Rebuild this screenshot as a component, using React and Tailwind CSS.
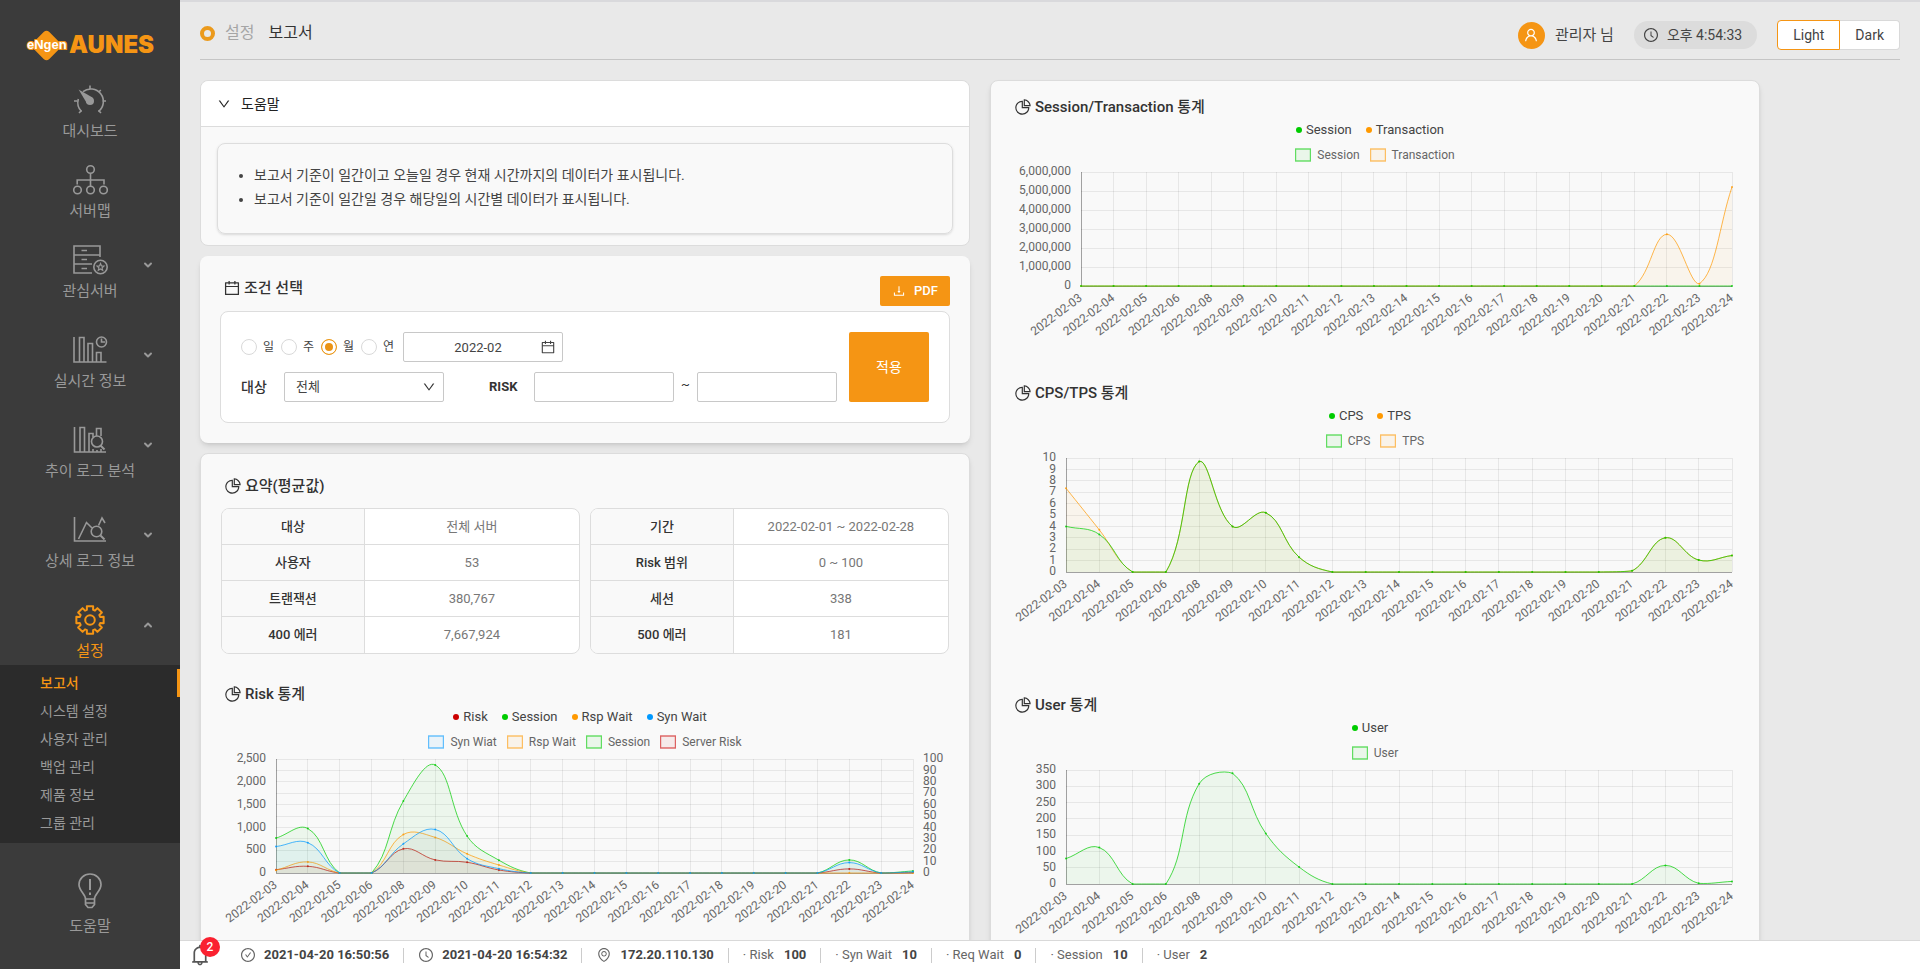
import React from 'react';
import {
  AiOutlineBell,
  AiOutlineCalendar,
  AiOutlineCheckCircle,
  AiOutlineClockCircle,
  AiOutlineDown,
  AiOutlineDownload,
  AiOutlineEnvironment,
  AiOutlinePieChart,
  AiOutlineUser,
} from 'react-icons/ai';
import { ChevronDown, ChevronUp } from 'lucide-react';

const GREEN = '#00cc00';
const ORANGE = '#ff9900';
const BLUE = '#0099ff';
const RED = '#cc0000';

const dates = [3, 4, 5, 6, 8, 9, 10, 11, 12, 13, 14, 15, 16, 17, 18, 19, 20, 21, 22, 23, 24].map(
  (day) => `2022-02-${String(day).padStart(2, '0')}`
);

const zeros = (count) => Array(count).fill(0);

const range = (max, step) => {
  const ticks = [];
  for (let value = 0; value <= max; value += step) ticks.push(value);
  return ticks;
};

const riskSeries = [
  { name: 'Syn Wiat', color: BLUE, data: [580, 665, 0, 0, 640, 955, 315, 95, ...zeros(10), 228, 0, 25] },
  { name: 'Rsp Wait', color: ORANGE, data: [60, 243, 0, 0, 845, 780, 420, 175, ...zeros(13)] },
  { name: 'Session', color: GREEN, data: [765, 975, 0, 0, 1580, 2368, 810, 280, ...zeros(10), 287, 0, 45] },
  { name: 'Server Risk', color: RED, data: [73, 147, 0, 0, 530, 287, 235, 66, ...zeros(10), 90, 0, 10] },
];

const transactionSeries = [
  { name: 'Session', color: GREEN, data: zeros(21) },
  { name: 'Transaction', color: ORANGE, data: [...zeros(18), 2720000, 120000, 5210000] },
];

const cpsTail = [0, 0, 9.7, 4, 5.2, 1.3, ...zeros(9), 0.1, 3, 1.05, 1.45];
const cpsSeries = [
  { name: 'CPS', color: GREEN, data: [4, 3.3, ...cpsTail] },
  { name: 'TPS', color: ORANGE, data: [7.35, 3.7, ...cpsTail] },
];

const userSeries = [
  { name: 'User', color: GREEN, data: [78, 112, 0, 0, 308, 340, 155, 52, ...zeros(10), 57, 2, 8] },
];

const clamp = (value, min, max) => Math.min(Math.max(value, min), max);

// Cubic spline through the points, control points kept inside the plot
const splinePath = (points, top, bottom) => {
  const tension = 0.4;
  const controls = points.map((point, i) => {
    const prev = points[i - 1] || point;
    const next = points[i + 1] || point;
    const before = Math.hypot(point[0] - prev[0], point[1] - prev[1]);
    const after = Math.hypot(next[0] - point[0], next[1] - point[1]);
    const a = (tension * before) / (before + after);
    const b = (tension * after) / (before + after);
    const dx = next[0] - prev[0];
    const dy = next[1] - prev[1];
    return {
      inX: point[0] - a * dx,
      inY: clamp(point[1] - a * dy, top, bottom),
      outX: point[0] + b * dx,
      outY: clamp(point[1] + b * dy, top, bottom),
    };
  });
  return points
    .map(([x, y], i) => {
      if (i === 0) return `M${x},${y}`;
      return `C${controls[i - 1].outX},${controls[i - 1].outY} ${controls[i].inX},${controls[i].inY} ${x},${y}`;
    })
    .join(' ');
};

const LineChart = ({ label, series, max, step, left, right = 721, rightAxis }) => {
  const top = 3;
  const bottom = 117;
  const xAt = (i) => left + ((right - left) * i) / (dates.length - 1);
  const yAt = (value) => bottom - ((bottom - top) * value) / max;
  const ticks = range(max, step);
  const gridTicks = rightAxis ? range(max, max / 10) : ticks;

  return (
    <svg viewBox="0 0 728 178" className="block w-full overflow-visible" role="img" aria-label={label}>
      <g stroke="#000" strokeOpacity="0.07" shapeRendering="crispEdges">
        {gridTicks.map((tick) => (
          <line key={tick} x1={left} x2={right} y1={yAt(tick)} y2={yAt(tick)} />
        ))}
        {dates.map((date, i) => (
          <line key={date} x1={xAt(i)} x2={xAt(i)} y1={top} y2={bottom} />
        ))}
      </g>
      <path
        d={`M${left},${top}V${bottom}H${right}`}
        fill="none"
        stroke="#000"
        strokeOpacity="0.3"
        shapeRendering="crispEdges"
      />
      {[...series].reverse().map((item) => {
        const points = item.data.map((value, i) => [xAt(i), yAt(value)]);
        const path = splinePath(points, top, bottom);
        return (
          <g key={item.name}>
            <path d={`${path} L${right},${bottom} L${left},${bottom}Z`} fill={item.color} fillOpacity="0.05" />
            <path d={path} fill="none" stroke={item.color} strokeOpacity="0.7" />
            {points.map(([x, y]) => (
              <circle key={x} cx={x} cy={y} r="1" fill={item.color} fillOpacity="0.8" />
            ))}
          </g>
        );
      })}
      <g fill="#666" fontSize="12" dominantBaseline="middle">
        {ticks.map((tick) => (
          <text key={tick} x={left - 10} y={yAt(tick)} textAnchor="end">
            {tick.toLocaleString('en-US')}
          </text>
        ))}
        {rightAxis &&
          range(100, 10).map((tick) => (
            <text key={tick} x={right + 10} y={yAt((tick * max) / 100)}>
              {tick}
            </text>
          ))}
        {dates.map((date, i) => (
          <text
            key={date}
            x={xAt(i)}
            y={bottom + 11}
            textAnchor="end"
            transform={`rotate(-37 ${xAt(i)} ${bottom + 11})`}
          >
            {date}
          </text>
        ))}
      </g>
    </svg>
  );
};

const SectionTitle = ({ icon: Icon = AiOutlinePieChart, children }) => (
  <h2 className="flex h-6 items-center gap-[3px] pl-[3px] text-[15px] font-medium text-[#333]">
    <Icon className="size-[18px]" />
    {children}
  </h2>
);

const ChartSection = ({ title, dots, series, className, ...chart }) => (
  <section className={className}>
    <SectionTitle>{title}</SectionTitle>
    <ul className="flex h-[22px] items-center justify-center gap-3.5 pr-2.5 text-[13px] text-[#444]">
      {dots.map(([name, color]) => (
        <li key={name} className="flex items-center gap-1">
          <span className="size-1.5 rounded-full" style={{ backgroundColor: color }} />
          {name}
        </li>
      ))}
    </ul>
    <ul className="flex h-7 items-center justify-center gap-2.5 text-xs text-[#666]">
      {series.map(({ name, color }) => (
        <li key={name} className="flex items-center gap-1.5">
          <svg className="h-3.5 w-4" viewBox="0 0 16 14">
            <rect
              x="0.5"
              y="1"
              width="15"
              height="12"
              fill={color}
              fillOpacity="0.06"
              stroke={color}
              strokeOpacity="0.6"
              strokeWidth="1.4"
            />
          </svg>
          {name}
        </li>
      ))}
    </ul>
    <LineChart label={title} series={series} {...chart} />
  </section>
);

const SummaryTable = ({ rows }) => (
  <div className="flex-1 overflow-hidden rounded-lg border border-[#ddd] bg-white">
    <table className="w-full table-fixed border-separate border-spacing-0 text-[13px]">
      <tbody>
        {rows.map(([name, value], i) => {
          const border = i < rows.length - 1 ? 'border-b border-[#ddd]' : '';
          return (
            <tr key={name} className="h-9">
              <th scope="row" className={`w-2/5 border-r border-r-[#ddd] bg-[#f9f9f9] font-medium text-[#333] ${border}`}>
                {name}
              </th>
              <td className={`text-center text-[#777] ${border}`}>{value}</td>
            </tr>
          );
        })}
      </tbody>
    </table>
  </div>
);

const Drawing = ({ children }) => (
  <svg viewBox="0 0 36 32" className="h-8 w-9" fill="none" stroke="currentColor" strokeWidth="1.6">
    {children}
  </svg>
);

const DashboardIcon = () => (
  <Drawing>
    <path d="M9.5 27.5A13 13 0 0 1 6.3 15M11 7.6A12.6 12.6 0 0 1 26.5 27.5" />
    <path d="M18 1.5V5M28.8 6L26.6 8.3M2 17H5.5M30.5 17H34M9.5 26.5L7 29M26.5 26.5L29 29" />
    <circle cx="18" cy="17" r="4" fill="currentColor" stroke="none" />
    <path d="M6.6 5.6L20.5 13.6L15 19.6Z" fill="currentColor" stroke="none" />
  </Drawing>
);

const ServerMapIcon = () => (
  <Drawing>
    <circle cx="18.5" cy="5.5" r="3.8" />
    <circle cx="5.5" cy="26" r="3.8" />
    <circle cx="18.5" cy="26" r="3.8" />
    <circle cx="31.5" cy="26" r="3.8" />
    <path d="M18.5 9.5V22M5.2 20.5V16H32V20.5" />
  </Drawing>
);

const FavoriteServerIcon = () => (
  <Drawing>
    <path d="M28 13V2H2V29H20M2 11H28M2 20H20M9.5 6.5H15M9.5 15.5H15M9.5 24.5H15" />
    <circle cx="28.5" cy="23" r="6.7" />
    <path
      d="M28.5 19.5l1 2.4 2.5.2-1.9 1.7.6 2.5-2.2-1.4-2.2 1.4.6-2.5-1.9-1.7 2.5-.2z"
      strokeWidth="1.2"
    />
  </Drawing>
);

const RealtimeIcon = () => (
  <Drawing>
    <path d="M2 3V28H34.5M7.5 28V3.5H12V28M16 28V9.5H20.5V28M24.5 28V18.5H29V28" />
    <circle cx="29.5" cy="8" r="5" />
    <path d="M29.5 4.5V8H33" />
  </Drawing>
);

const TrendLogIcon = () => (
  <Drawing>
    <path d="M2.5 3V28H34M8 28V3.5H12.5V28M17 28V9.5H21V13M24.5 12V4.5H29V12M21 25V28M25 26V28M29 25V28" />
    <circle cx="25" cy="17.5" r="5.5" />
    <path d="M28.5 21.5L32.5 25.5" strokeWidth="2" />
  </Drawing>
);

const DetailLogIcon = () => (
  <Drawing>
    <path d="M2.5 3V27H34M6.5 25L14.5 8.5L20 14M26.5 11.5L30 4L33 9" />
    <circle cx="24.5" cy="17.5" r="5.3" />
    <path d="M28.5 21.5L32.5 25.5" strokeWidth="2" />
  </Drawing>
);

const SettingIcon = () => {
  const points = [];
  for (let tooth = 0; tooth < 8; tooth += 1) {
    [[-17, 10.6], [-13, 14], [13, 14], [17, 10.6]].forEach(([shift, radius]) => {
      const angle = ((tooth * 45 + shift) * Math.PI) / 180;
      points.push(`${18 + radius * Math.sin(angle)},${16 - radius * Math.cos(angle)}`);
    });
  }
  return (
    <Drawing>
      <polygon points={points.join(' ')} strokeWidth="2" strokeLinejoin="round" />
      <circle cx="18" cy="16" r="4.8" strokeWidth="2" />
    </Drawing>
  );
};

const BulbIcon = () => (
  <svg viewBox="0 0 26 36" className="mb-0.5 h-9 w-[26px]" fill="none" stroke="currentColor" strokeWidth="1.7">
    <path d="M8.5 26C8.5 21 2 18 2 11.5A11 10.5 0 0 1 24 11.5C24 18 17.5 21 17.5 26ZM8.5 26V31.5L11 34.5H15L17.5 31.5V26M8.5 30H17.5" />
    <path d="M13 6V17M13 19.5V22" strokeWidth="2" />
  </svg>
);

const Logo = () => (
  <svg viewBox="0 0 136 32" className="h-8 w-[136px]" role="img" aria-label="eNgen AUNES">
    <rect x="11" y="5" width="23" height="23" rx="4" fill="#f59514" transform="rotate(45 22.5 16.5)" />
    <text
      x="3"
      y="20"
      fontSize="13"
      className="font-['Liberation_Sans'] font-bold"
      fill="#fff"
      stroke="#f59514"
      strokeWidth="2"
      paintOrder="stroke"
    >
      eNgen
    </text>
    <text x="45" y="24" fontSize="24" className="font-['Inter'] font-black" fill="#f59514">
      AUNES
    </text>
  </svg>
);

const menus = [
  { name: '대시보드', icon: DashboardIcon },
  { name: '서버맵', icon: ServerMapIcon },
  { name: '관심서버', icon: FavoriteServerIcon, sub: true },
  { name: '실시간 정보', icon: RealtimeIcon, sub: true },
  { name: '추이 로그 분석', icon: TrendLogIcon, sub: true },
  { name: '상세 로그 정보', icon: DetailLogIcon, sub: true },
];

const settingMenus = ['보고서', '시스템 설정', '사용자 관리', '백업 관리', '제품 정보', '그룹 관리'];

const MenuButton = ({ name, icon: Icon, sub, open }) => {
  const Chevron = open ? ChevronUp : ChevronDown;
  return (
    <button
      type="button"
      className={`grid w-full grid-cols-[38px_1fr_38px] text-[15px] ${open ? 'text-[#f59514]' : 'text-[#999]'}`}
    >
      <span />
      <span className="flex flex-col items-center gap-[5px]">
        <Icon />
        <span className="h-5 leading-5 whitespace-nowrap">{name}</span>
      </span>
      {sub && <Chevron className="mt-[15px] size-3 text-[#999]" strokeWidth={4} />}
    </button>
  );
};

const Sidebar = () => (
  <aside className="w-[180px] shrink-0 bg-[#3b3b3b]">
    <a href="#" className="flex h-[84px] items-center pt-1.5 pl-6">
      <Logo />
    </a>
    <nav>
      <ul>
        {menus.map((menu) => (
          <li key={menu.name} className={menu.sub ? 'pb-[33px]' : 'pb-[23px]'}>
            <MenuButton {...menu} />
          </li>
        ))}
        <li>
          <MenuButton name="설정" icon={SettingIcon} sub open />
          <ul className="mt-1 bg-[#2b2b2b] pt-1 pb-1.5 text-sm">
            {settingMenus.map((name, i) => (
              <li key={name}>
                <a
                  href="#"
                  className={`block h-7 pl-10 leading-7 ${
                    i === 0 ? 'border-r-[3px] border-[#f59514] font-medium text-[#f59514]' : 'text-[#999]'
                  }`}
                >
                  {name}
                </a>
              </li>
            ))}
          </ul>
        </li>
        <li className="pt-[30px]">
          <MenuButton name="도움말" icon={BulbIcon} />
        </li>
      </ul>
    </nav>
  </aside>
);

const Header = () => (
  <header className="mx-5 flex h-[58px] items-start justify-between border-b border-[#c5c5c5] pt-[18px]">
    <div className="flex h-[26px] items-center text-base">
      <span className="mr-2.5 size-[15px] rounded-full border-4 border-[#eb9a1c]" />
      <span className="mr-3.5 text-[#a5a5a5]">설정</span>
      <h1 className="text-[#333]">보고서</h1>
    </div>
    <div className="flex items-center text-sm text-[#444]">
      <span className="mr-2.5 flex size-[27px] items-center justify-center rounded-full bg-[#f59514] text-white">
        <AiOutlineUser className="size-4" />
      </span>
      <span className="mr-5 text-[15px] leading-5">관리자 님</span>
      <span className="mr-5 flex h-7 items-center gap-2 rounded-full bg-[#dcdcdc] px-[9px] pr-[15px]">
        <AiOutlineClockCircle className="size-4" />
        오후 4:54:33
      </span>
      <button type="button" className="h-[30px] rounded-l-sm border border-[#f59514] bg-white px-[15px]">
        Light
      </button>
      <button type="button" className="h-[30px] rounded-r-sm border border-l-0 border-[#d9d9d9] bg-white px-[15px]">
        Dark
      </button>
    </div>
  </header>
);

const HelpCard = () => (
  <section className="rounded-lg border border-[#dcdcdc] bg-[#f9f9f9] pb-[11px]">
    <button
      type="button"
      className="flex h-[46px] w-full items-center gap-2.5 rounded-t-lg border-b border-[#dcdcdc] bg-white pl-4 text-sm text-[#222]"
    >
      <AiOutlineDown className="size-3.5" />
      도움말
    </button>
    <ul className="m-4 mb-0 h-[91px] list-disc rounded-lg border border-[#ddd] pt-[19px] pl-9 text-sm leading-6 text-[#444] shadow-sm">
      <li>보고서 기준이 일간이고 오늘일 경우 현재 시간까지의 데이터가 표시됩니다.</li>
      <li>보고서 기준이 일간일 경우 해당일의 시간별 데이터가 표시됩니다.</li>
    </ul>
  </section>
);

const fieldClass = 'h-[30px] rounded-xs border border-[#c8c8c8] bg-white text-[13px] text-[#444] outline-none';

const ConditionCard = () => (
  <section className="rounded-lg bg-[#f9f9f9] p-5 shadow-md">
    <div className="flex items-start justify-between">
      <SectionTitle icon={AiOutlineCalendar}>조건 선택</SectionTitle>
      <button
        type="button"
        className="flex h-[30px] w-[70px] items-center justify-center gap-2 rounded-xs bg-[#f59514] text-[13px] font-medium text-white"
      >
        <AiOutlineDownload className="size-3.5" />
        PDF
      </button>
    </div>
    <form className="mt-[5px] flex gap-3 rounded-lg border border-[#ddd] bg-white p-5" onSubmit={(e) => e.preventDefault()}>
      <div className="flex-1 space-y-2.5">
        <div className="flex items-center">
          {['일', '주', '월', '연'].map((unit) => (
            <label key={unit} className="flex w-10 items-center gap-1.5 text-xs text-[#444]">
              <input
                type="radio"
                name="unit"
                defaultChecked={unit === '월'}
                className="size-4 appearance-none rounded-full border border-[#d9d9d9] bg-white checked:border-[#eb9a1c] checked:bg-[#eb9314] checked:shadow-[inset_0_0_0_3px_white]"
              />
              {unit}
            </label>
          ))}
          <div className="relative ml-0.5">
            <input aria-label="기준 월" defaultValue="2022-02" className={`${fieldClass} w-40 pr-2.5 text-center`} />
            <AiOutlineCalendar className="absolute top-[7px] right-[7px] size-4 text-[#444]" />
          </div>
        </div>
        <div className="flex items-center text-[13px] text-[#333]">
          <label htmlFor="target" className="w-[43px] text-sm font-medium">
            대상
          </label>
          <div className="relative">
            <select id="target" className={`${fieldClass} w-40 appearance-none pl-[11px] text-sm`}>
              <option>전체</option>
            </select>
            <AiOutlineDown className="pointer-events-none absolute top-2 right-2 size-3.5" />
          </div>
          <label htmlFor="risk-from" className="ml-[45px] w-[45px] font-bold">
            RISK
          </label>
          <input id="risk-from" className={`${fieldClass} w-0 flex-1 px-2`} />
          <span className="w-[23px] pb-1 text-center">~</span>
          <input aria-label="RISK 최대" className={`${fieldClass} w-0 flex-1 px-2`} />
        </div>
      </div>
      <button type="submit" className="w-20 rounded-xs bg-[#f59514] text-sm text-white">
        적용
      </button>
    </form>
  </section>
);

const ReportCard = () => (
  <section className="rounded-lg border border-[#dcdcdc] bg-[#f9f9f9] p-5 shadow-md">
    <SectionTitle>요약(평균값)</SectionTitle>
    <div className="mt-2.5 mb-7 flex gap-2.5">
      <SummaryTable
        rows={[
          ['대상', '전체 서버'],
          ['사용자', '53'],
          ['트랜잭션', '380,767'],
          ['400 에러', '7,667,924'],
        ]}
      />
      <SummaryTable
        rows={[
          ['기간', '2022-02-01 ~ 2022-02-28'],
          ['Risk 범위', '0 ~ 100'],
          ['세션', '338'],
          ['500 에러', '181'],
        ]}
      />
    </div>
    <ChartSection
      title="Risk 통계"
      dots={[['Risk', RED], ['Session', GREEN], ['Rsp Wait', ORANGE], ['Syn Wait', BLUE]]}
      series={riskSeries}
      max={2500}
      step={500}
      left={55}
      right={692}
      rightAxis
    />
  </section>
);

const ChartCard = () => (
  <section className="rounded-lg border border-[#dcdcdc] bg-[#f9f9f9] px-5 pt-3.5 pb-5 shadow-md">
    <ChartSection
      className="mb-[34px]"
      title="Session/Transaction 통계"
      dots={[['Session', GREEN], ['Transaction', ORANGE]]}
      series={transactionSeries}
      max={6000000}
      step={1000000}
      left={70}
    />
    <ChartSection
      className="mb-[60px]"
      title="CPS/TPS 통계"
      dots={[['CPS', GREEN], ['TPS', ORANGE]]}
      series={cpsSeries}
      max={10}
      step={1}
      left={55}
    />
    <ChartSection
      title="User 통계"
      dots={[['User', GREEN]]}
      series={userSeries}
      max={350}
      step={50}
      left={55}
    />
  </section>
);

const statusTimes = [
  [AiOutlineCheckCircle, '2021-04-20 16:50:56'],
  [AiOutlineClockCircle, '2021-04-20 16:54:32'],
  [AiOutlineEnvironment, '172.20.110.130'],
];

const statusCounts = [['Risk', 100], ['Syn Wait', 10], ['Req Wait', 0], ['Session', 10], ['User', 2]];

const StatusBar = () => (
  <footer className="flex h-[29px] shrink-0 items-center border-t border-[#d9d9d9] bg-white text-[13px] text-[#666]">
    <button type="button" aria-label="알림" className="relative mr-3.5 ml-2 text-[#555]">
      <AiOutlineBell className="size-6" />
      <span className="absolute -top-1.5 left-3 flex size-5 items-center justify-center rounded-full bg-[#fa2130] text-xs font-medium text-white">
        2
      </span>
    </button>
    <ul className="flex items-center divide-x divide-[#ccc]">
      {statusTimes.map(([Icon, value]) => (
        <li key={value} className="flex h-[15px] items-center gap-2 px-3.5">
          <Icon className="size-4" />
          <strong className="font-bold text-[#444]">{value}</strong>
        </li>
      ))}
      {statusCounts.map(([name, value]) => (
        <li key={name} className="flex h-[15px] items-center gap-2.5 px-3.5">
          <span>· {name}</span>
          <strong className="font-bold text-[#444]">{value}</strong>
        </li>
      ))}
    </ul>
  </footer>
);

const App = () => {
  return (
    <div className="flex h-screen overflow-hidden bg-[#e9e9e9] font-['Roboto','Noto_Sans_CJK_KR',sans-serif]">
      <Sidebar />
      <div className="flex min-w-0 flex-1 flex-col border-t-2 border-[#d9d9dc]">
        <Header />
        <main className="min-h-0 flex-1 overflow-hidden px-5 pt-5">
          <div className="grid max-w-[1560px] grid-cols-2 items-start gap-5">
            <div className="flex flex-col gap-2.5">
              <HelpCard />
              <ConditionCard />
              <ReportCard />
            </div>
            <ChartCard />
          </div>
        </main>
        <StatusBar />
      </div>
    </div>
  );
};

export default App;
